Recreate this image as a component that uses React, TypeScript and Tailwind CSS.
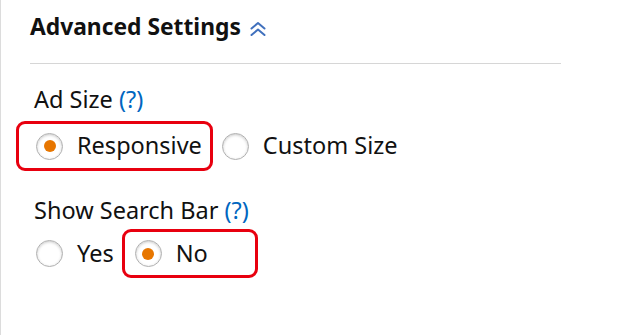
import React, { useState } from 'react';

const FONT = "font-['Noto_Sans','Liberation_Sans',sans-serif]";

const Radio: React.FC<{ checked: boolean }> = ({ checked }) => (
  <span className="flex h-[27px] w-[27px] shrink-0 items-center justify-center rounded-full border border-[#b0b0b0] bg-white shadow-[inset_0_1px_3px_rgba(0,0,0,0.22)]">
    {checked && <span className="h-[12px] w-[12px] rounded-full bg-[#e77600]"></span>}
  </span>
);

const Help: React.FC = () => <span className="text-[#0066c0]">(?)</span>;

const App: React.FC = () => {
  const [adSize, setAdSize] = useState('responsive');
  const [searchBar, setSearchBar] = useState('no');

  return (
    <div className={`${FONT} h-[335px] w-[621px] bg-white text-[#111]`}>
      <div className="h-full w-[561px] border-l border-[#dcdcdc] pl-[29px]">
        <div className="flex items-center gap-[9px] pt-[11px]">
          <h3 className="text-[22.8px] font-bold leading-[32px]">Advanced Settings</h3>
          <svg width="16" height="16" viewBox="0 0 16 16" fill="none" stroke="#4070bd" strokeWidth="2" strokeLinecap="round" strokeLinejoin="round" className="mt-[3px]">
            <path d="M1.5 7.5 L8 2 L14.5 7.5" />
            <path d="M1.5 14 L8 8.5 L14.5 14" />
          </svg>
        </div>
        <div className="mt-[20px] h-px bg-[#d6d6d6]"></div>

        <div className="mt-[20px] pl-[4px] text-[23.5px] leading-[30px]">
          Ad Size <Help />
        </div>
        <div className="mt-[7px] flex items-center text-[23.5px]">
          <button
            onClick={() => setAdSize('responsive')}
            className={`-ml-[14px] flex h-[50px] items-center gap-[14px] rounded-[9px] border-[3px] pl-[17px] pr-[8px] ${adSize === 'responsive' ? 'border-[#e8000f]' : 'border-transparent'}`}
          >
            <Radio checked={adSize === 'responsive'} />
            <span>Responsive</span>
          </button>
          <button onClick={() => setAdSize('custom')} className="ml-[9px] flex items-center gap-[14px]">
            <Radio checked={adSize === 'custom'} />
            <span>Custom Size</span>
          </button>
        </div>

        <div className="mt-[24px] pl-[4px] text-[23.5px] leading-[30px]">
          Show Search Bar <Help />
        </div>
        <div className="mt-[4px] flex items-center text-[23.5px]">
          <button onClick={() => setSearchBar('yes')} className="ml-[6px] flex items-center gap-[14px]">
            <Radio checked={searchBar === 'yes'} />
            <span>Yes</span>
          </button>
          <button
            onClick={() => setSearchBar('no')}
            className={`ml-[8px] flex h-[49px] w-[136px] items-center gap-[14px] rounded-[9px] border-[3px] pl-[10px] ${searchBar === 'no' ? 'border-[#e8000f]' : 'border-transparent'}`}
          >
            <Radio checked={searchBar === 'no'} />
            <span>No</span>
          </button>
        </div>
      </div>
    </div>
  );
};

export default App;
